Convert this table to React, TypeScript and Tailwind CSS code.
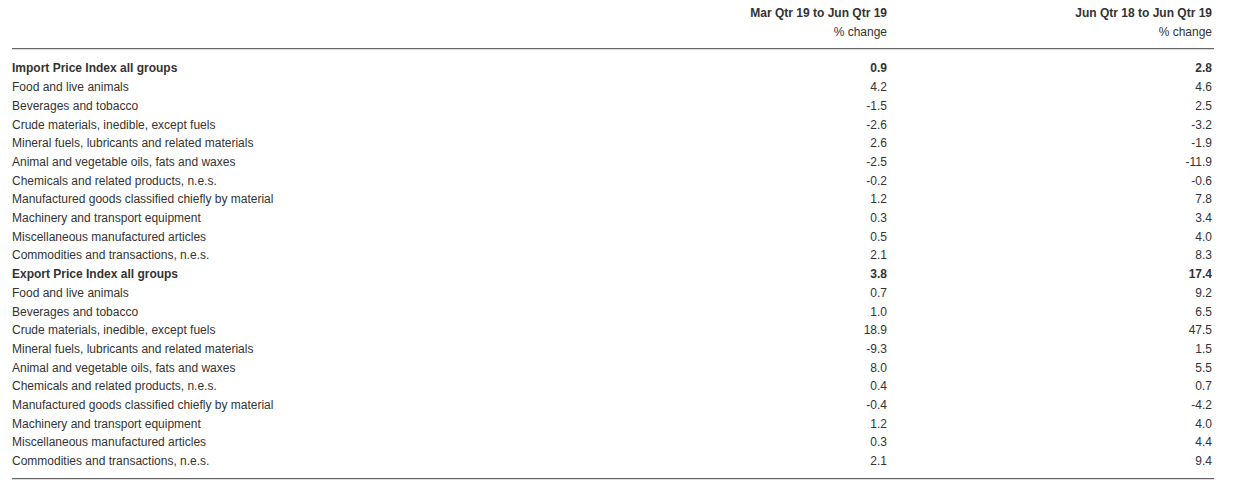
const groups = [
  {
    title: "Import Price Index all groups",
    total: ["0.9", "2.8"],
    rows: [
      ["Food and live animals", "4.2", "4.6"],
      ["Beverages and tobacco", "-1.5", "2.5"],
      ["Crude materials, inedible, except fuels", "-2.6", "-3.2"],
      ["Mineral fuels, lubricants and related materials", "2.6", "-1.9"],
      ["Animal and vegetable oils, fats and waxes", "-2.5", "-11.9"],
      ["Chemicals and related products, n.e.s.", "-0.2", "-0.6"],
      ["Manufactured goods classified chiefly by material", "1.2", "7.8"],
      ["Machinery and transport equipment", "0.3", "3.4"],
      ["Miscellaneous manufactured articles", "0.5", "4.0"],
      ["Commodities and transactions, n.e.s.", "2.1", "8.3"],
    ],
  },
  {
    title: "Export Price Index all groups",
    total: ["3.8", "17.4"],
    rows: [
      ["Food and live animals", "0.7", "9.2"],
      ["Beverages and tobacco", "1.0", "6.5"],
      ["Crude materials, inedible, except fuels", "18.9", "47.5"],
      ["Mineral fuels, lubricants and related materials", "-9.3", "1.5"],
      ["Animal and vegetable oils, fats and waxes", "8.0", "5.5"],
      ["Chemicals and related products, n.e.s.", "0.4", "0.7"],
      ["Manufactured goods classified chiefly by material", "-0.4", "-4.2"],
      ["Machinery and transport equipment", "1.2", "4.0"],
      ["Miscellaneous manufactured articles", "0.3", "4.4"],
      ["Commodities and transactions, n.e.s.", "2.1", "9.4"],
    ],
  },
];

const Row = ({ cells, bold }: { cells: string[]; bold?: boolean }) => (
  <div className={`flex h-[18.71px] items-center ${bold ? "font-bold" : ""}`}>
    <div className="flex-1">{cells[0]}</div>
    <div className="w-[300px] pr-[2px] text-right">{cells[1]}</div>
    <div className="w-[325px] pr-[2px] text-right">{cells[2]}</div>
  </div>
);

const Divider = () => (
  <div>
    <div className="h-px bg-[#666]"></div>
    <div className="h-px bg-[#ddd]"></div>
  </div>
);

export default function App() {
  return (
    <div className="w-[1240px] h-[489px] bg-white text-[12px] leading-[18.71px] text-[#333] font-['Liberation_Sans',Arial,sans-serif]">
      <div className="ml-[12px] w-[1202px]">
        <div className="flex pt-[4px] pb-[7px]">
          <div className="flex-1"></div>
          <div className="w-[300px] pr-[2px] text-right">
            <div className="font-bold">Mar Qtr 19 to Jun Qtr 19</div>
            <div>% change</div>
          </div>
          <div className="w-[325px] pr-[2px] text-right">
            <div className="font-bold">Jun Qtr 18 to Jun Qtr 19</div>
            <div>% change</div>
          </div>
        </div>
        <Divider />
        <div className="pt-[9px] pb-[7px]">
          {groups.map((g) => (
            <div key={g.title}>
              <Row cells={[g.title, ...g.total]} bold />
              {g.rows.map((r, i) => (
                <Row key={i} cells={r} />
              ))}
            </div>
          ))}
        </div>
        <Divider />
      </div>
    </div>
  );
}
